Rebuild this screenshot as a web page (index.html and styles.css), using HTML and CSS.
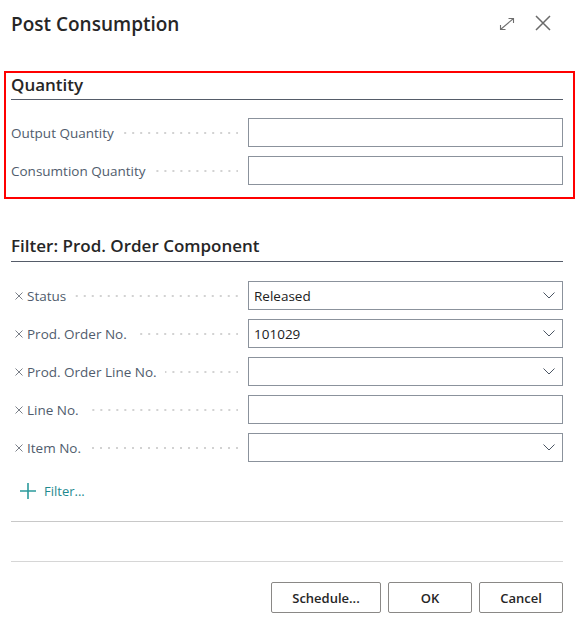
FILE: index.html
```html
<!DOCTYPE html>
<html lang="en">
<head>
<meta charset="utf-8">
<title>Post Consumption</title>
<link rel="stylesheet" href="styles.css">
</head>
<body>
<div class="dialog">
  <header class="header">
    <h1 class="title">Post Consumption</h1>
    <div class="header-actions">
      <svg class="icon-expand" width="16" height="14" viewBox="0 0 16 14" aria-hidden="true">
        <path d="M1.5 12.5 L14.5 1.5" stroke="#6e6e6e" stroke-width="1.1" fill="none"/>
        <path d="M9.5 1.5 H14.5 V6" stroke="#6e6e6e" stroke-width="1.1" fill="none"/>
        <path d="M1.5 8 V12.5 H6.5" stroke="#6e6e6e" stroke-width="1.1" fill="none"/>
      </svg>
      <svg class="icon-close" width="16" height="16" viewBox="0 0 16 16" aria-hidden="true">
        <path d="M1 1 L15 15 M15 1 L1 15" stroke="#6a6a6a" stroke-width="1.5" fill="none"/>
      </svg>
    </div>
  </header>

  <section class="group group-highlight">
    <h2 class="group-title">Quantity</h2>
    <div class="fields">
      <div class="field">
        <div class="caption"><span class="caption-text">Output Quantity</span><span class="leader"></span></div>
        <div class="input"></div>
      </div>
      <div class="field">
        <div class="caption"><span class="caption-text">Consumtion Quantity</span><span class="leader"></span></div>
        <div class="input"></div>
      </div>
    </div>
  </section>

  <section class="group group-filter">
    <h2 class="group-title">Filter: Prod. Order Component</h2>
    <div class="fields">
      <div class="field">
        <div class="caption caption-filter"><svg class="remove" width="8" height="8" viewBox="0 0 8 8"><path d="M0.5 0.5 L7.5 7.5 M7.5 0.5 L0.5 7.5" stroke="#7b8089" stroke-width="1" fill="none"/></svg><span class="caption-text">Status</span><span class="leader"></span></div>
        <div class="input select"><span class="value">Released</span><svg class="chevron" width="12" height="7" viewBox="0 0 12 7"><path d="M0.5 0.5 L6 6 L11.5 0.5" stroke="#4b5563" stroke-width="1" fill="none"/></svg></div>
      </div>
      <div class="field">
        <div class="caption caption-filter"><svg class="remove" width="8" height="8" viewBox="0 0 8 8"><path d="M0.5 0.5 L7.5 7.5 M7.5 0.5 L0.5 7.5" stroke="#7b8089" stroke-width="1" fill="none"/></svg><span class="caption-text">Prod. Order No.</span><span class="leader"></span></div>
        <div class="input select"><span class="value">101029</span><svg class="chevron" width="12" height="7" viewBox="0 0 12 7"><path d="M0.5 0.5 L6 6 L11.5 0.5" stroke="#4b5563" stroke-width="1" fill="none"/></svg></div>
      </div>
      <div class="field">
        <div class="caption caption-filter"><svg class="remove" width="8" height="8" viewBox="0 0 8 8"><path d="M0.5 0.5 L7.5 7.5 M7.5 0.5 L0.5 7.5" stroke="#7b8089" stroke-width="1" fill="none"/></svg><span class="caption-text">Prod. Order Line No.</span><span class="leader"></span></div>
        <div class="input select"><span class="value"></span><svg class="chevron" width="12" height="7" viewBox="0 0 12 7"><path d="M0.5 0.5 L6 6 L11.5 0.5" stroke="#4b5563" stroke-width="1" fill="none"/></svg></div>
      </div>
      <div class="field">
        <div class="caption caption-filter"><svg class="remove" width="8" height="8" viewBox="0 0 8 8"><path d="M0.5 0.5 L7.5 7.5 M7.5 0.5 L0.5 7.5" stroke="#7b8089" stroke-width="1" fill="none"/></svg><span class="caption-text">Line No.</span><span class="leader"></span></div>
        <div class="input"></div>
      </div>
      <div class="field">
        <div class="caption caption-filter"><svg class="remove" width="8" height="8" viewBox="0 0 8 8"><path d="M0.5 0.5 L7.5 7.5 M7.5 0.5 L0.5 7.5" stroke="#7b8089" stroke-width="1" fill="none"/></svg><span class="caption-text">Item No.</span><span class="leader"></span></div>
        <div class="input select"><span class="value"></span><svg class="chevron" width="12" height="7" viewBox="0 0 12 7"><path d="M0.5 0.5 L6 6 L11.5 0.5" stroke="#4b5563" stroke-width="1" fill="none"/></svg></div>
      </div>
    </div>
    <div class="add-filter">
      <svg class="plus" width="16" height="16" viewBox="0 0 16 16" aria-hidden="true">
        <path d="M8 0 V16 M0 8 H16" stroke="#2b9a9c" stroke-width="1.6" fill="none"/>
      </svg>
      <span class="add-filter-text">Filter...</span>
    </div>
  </section>

  <div class="separator"></div>
  <div class="separator separator-footer"></div>

  <footer class="footer">
    <button class="btn btn-wide" type="button">Schedule...</button>
    <button class="btn" type="button">OK</button>
    <button class="btn" type="button">Cancel</button>
  </footer>
</div>
</body>
</html>
```

FILE: styles.css
```css
* {
  box-sizing: border-box;
}

html, body {
  margin: 0;
  padding: 0;
  background: #ffffff;
}

body {
  font-family: "Open Sans", "Noto Sans", "Liberation Sans", sans-serif;
  color: #212121;
}

.dialog {
  width: 581px;
  padding: 10px 18px 0 11px;
  display: flex;
  flex-direction: column;
}

.header {
  display: flex;
  align-items: flex-start;
  justify-content: space-between;
  height: 28px;
}

.title {
  margin: 0;
  font-size: 19px;
  line-height: 28px;
  font-weight: 600;
  color: #262626;
}

.header-actions {
  display: flex;
  align-items: center;
  gap: 20px;
  margin-top: 5px;
  margin-right: 12px;
}

.icon-expand {
  display: block;
  margin-top: 1px;
}

.icon-close {
  display: block;
}

.group-highlight {
  margin: 33px -12px 0 -7px;
  border: 2px solid #ff0000;
  padding: 0 10px 12px 5px;
}

.group-title {
  margin: 0;
  font-size: 17px;
  line-height: 24px;
  font-weight: 600;
  color: #262626;
  padding-bottom: 2px;
  border-bottom: 1px solid #555c69;
}

.group-filter {
  margin-top: 35px;
}

.group-filter .group-title {
  padding-bottom: 3px;
}

.fields {
  display: flex;
  flex-direction: column;
  gap: 9px;
  margin-top: 18px;
}

.group-filter .fields {
  margin-top: 19px;
}

.field {
  display: flex;
  align-items: center;
  height: 29px;
}

.caption {
  flex: 1;
  display: flex;
  align-items: center;
  font-size: 13.5px;
  line-height: 20px;
  color: #505c6d;
  min-width: 0;
}

.caption-filter {
  padding-left: 4px;
}

.remove {
  display: block;
  flex: none;
  margin-right: 4px;
}

.caption-text {
  white-space: nowrap;
}

.leader {
  flex: 1;
  height: 2px;
  margin: 1px 10px 0 8px;
  background-image: linear-gradient(to left, #d2d2d2 2px, transparent 2px);
  background-size: 8px 2px;
  background-position: right center;
  background-repeat: repeat-x;
}

.input {
  width: 315px;
  height: 29px;
  border: 1px solid #8b929c;
  background: #ffffff;
  display: flex;
  align-items: center;
  padding: 0 7px 0 5px;
  font-size: 13.5px;
  color: #212121;
}

.select .value {
  flex: 1;
}

.chevron {
  display: block;
}

.add-filter {
  display: flex;
  align-items: center;
  height: 20px;
  margin-top: 19px;
  padding-left: 9px;
  gap: 8px;
}

.plus {
  display: block;
}

.add-filter-text {
  font-size: 13px;
  color: #1f8a8f;
}

.separator {
  height: 1px;
  background: #c8c8c8;
  margin-top: 20px;
}

.separator-footer {
  margin-top: 39px;
  background: #d6d6d6;
}

.footer {
  display: flex;
  justify-content: flex-end;
  gap: 7px;
  margin-top: 20px;
}

.btn {
  width: 84px;
  height: 31px;
  border: 1px solid #8a8886;
  border-radius: 2px;
  background: #ffffff;
  font-family: "Open Sans", "Noto Sans", "Liberation Sans", sans-serif;
  font-size: 13px;
  font-weight: 600;
  color: #262626;
  padding: 0;
}

.btn-wide {
  width: 110px;
}
```
